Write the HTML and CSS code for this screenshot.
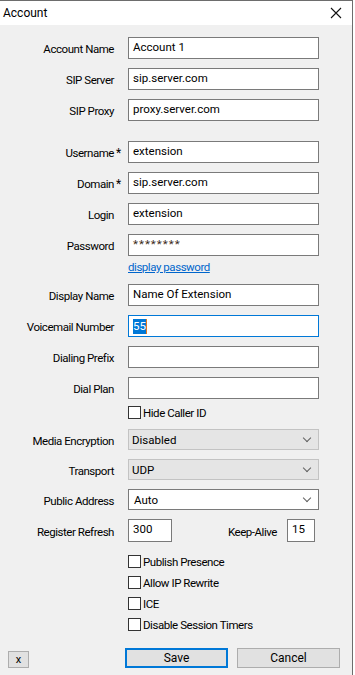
FILE: index.html
```html
<!DOCTYPE html>
<html>
<head>
	<title>Account</title>
	<link rel="stylesheet" href="styles.css">
</head>
<body>
	<div class="window">
		<div class="titlebar">
			<span class="title">Account</span>
			<svg class="close" width="12" height="12" viewBox="0 0 12 12">
				<path d="M1 1 L11 11 M11 1 L1 11" stroke="#111" stroke-width="1.1" fill="none"/>
			</svg>
		</div>
		<div class="content">
			<div class="row">
				<span class="label">Account Name</span><span class="req"></span>
				<div class="field">Account 1</div>
			</div>
			<div class="row">
				<span class="label">SIP Server</span><span class="req"></span>
				<div class="field">sip.server.com</div>
			</div>
			<div class="row group-end">
				<span class="label">SIP Proxy</span><span class="req"></span>
				<div class="field">proxy.server.com</div>
			</div>

			<div class="row">
				<span class="label">Username</span><span class="req">*</span>
				<div class="field">extension</div>
			</div>
			<div class="row">
				<span class="label">Domain</span><span class="req">*</span>
				<div class="field">sip.server.com</div>
			</div>
			<div class="row">
				<span class="label">Login</span><span class="req"></span>
				<div class="field">extension</div>
			</div>
			<div class="row tight">
				<span class="label">Password</span><span class="req"></span>
				<div class="field password">********</div>
			</div>
			<div class="link-row">
				<a href="#" class="link">display password</a>
			</div>

			<div class="row">
				<span class="label">Display Name</span><span class="req"></span>
				<div class="field">Name Of Extension</div>
			</div>
			<div class="row">
				<span class="label">Voicemail Number</span><span class="req"></span>
				<div class="field focused"><span class="selected">55</span><span class="caret"></span></div>
			</div>
			<div class="row">
				<span class="label">Dialing Prefix</span><span class="req"></span>
				<div class="field"></div>
			</div>
			<div class="row tight">
				<span class="label">Dial Plan</span><span class="req"></span>
				<div class="field"></div>
			</div>
			<div class="check-row hide-id">
				<span class="box"></span><span>Hide Caller ID</span>
			</div>

			<div class="row select-row">
				<span class="label">Media Encryption</span><span class="req"></span>
				<div class="select disabled"><span>Disabled</span><span class="chev"></span></div>
			</div>
			<div class="row select-row">
				<span class="label">Transport</span><span class="req"></span>
				<div class="select disabled"><span>UDP</span><span class="chev"></span></div>
			</div>
			<div class="row select-row">
				<span class="label">Public Address</span><span class="req"></span>
				<div class="select"><span>Auto</span><span class="chev"></span></div>
			</div>
			<div class="row refresh-row">
				<span class="label">Register Refresh</span><span class="req"></span>
				<div class="split">
					<div class="field small">300</div>
					<span class="label keep">Keep-Alive</span>
					<div class="field tiny">15</div>
				</div>
			</div>

			<div class="check-row">
				<span class="box"></span><span>Publish Presence</span>
			</div>
			<div class="check-row">
				<span class="box"></span><span>Allow IP Rewrite</span>
			</div>
			<div class="check-row">
				<span class="box"></span><span>ICE</span>
			</div>
			<div class="check-row">
				<span class="box"></span><span>Disable Session Timers</span>
			</div>

			<div class="buttons">
				<button class="btn small-btn">x</button>
				<button class="btn default">Save</button>
				<button class="btn">Cancel</button>
			</div>
		</div>
	</div>
</body>
</html>
```
FILE: styles.css
```css
body {
	margin: 0;
	font-family: "Segoe UI", Roboto, "Liberation Sans", sans-serif;
	font-size: 11.5px;
	color: #000;
	background: #fff;
}

.window {
	width: 353px;
	height: 675px;
	border-top: 1px solid #6d6d6d;
	border-right: 1px solid #6d6d6d;
	background: #f0f0f0;
	box-sizing: border-box;
	overflow: hidden;
}

.titlebar {
	height: 24px;
	background: #fff;
	display: flex;
	align-items: center;
	justify-content: space-between;
	padding: 0 10px 0 3px;
}

.title {
	font-size: 12px;
}

.content {
	padding-top: 12px;
}

.row {
	display: grid;
	grid-template-columns: 114px 14px 191px;
	align-items: center;
	height: 22px;
	margin-bottom: 9px;
}

.row.group-end {
	margin-bottom: 20px;
}

.row.tight {
	margin-bottom: 0;
}

.row.select-row {
	height: 21px;
}

.row.refresh-row {
	height: 23px;
	margin-bottom: 9px;
}

.label,
.check-row,
.link {
	font-size: 11.5px;
	letter-spacing: -0.45px;
}

.label {
	text-align: right;
	white-space: nowrap;
	padding-top: 2px;
}

.req {
	padding-left: 2px;
	padding-top: 2px;
	font-size: 12px;
}

.field {
	height: 22px;
	box-sizing: border-box;
	border: 1px solid #7a7a7a;
	background: #fff;
	padding: 2px 4px;
	font-size: 11.5px;
	white-space: nowrap;
	overflow: hidden;
}

.field.password {
	color: #3a2a1a;
	letter-spacing: 1px;
}

.field.focused {
	border-color: #0078d7;
	display: flex;
	align-items: center;
	padding: 0 4px;
}

.selected {
	background: #0078d7;
	color: #fff;
	line-height: 15px;
}

.caret {
	width: 1px;
	height: 15px;
	background: #e07a1f;
}

.link-row {
	height: 28px;
	padding-left: 128px;
	box-sizing: border-box;
	padding-top: 4px;
}

.link {
	color: #0066cc;
	text-decoration: underline;
}

.check-row {
	display: flex;
	align-items: center;
	gap: 2px;
	padding-left: 128px;
	height: 21px;
}

.check-row.hide-id {
	margin-top: 3px;
	margin-bottom: 6px;
}

.box {
	width: 13px;
	height: 13px;
	box-sizing: border-box;
	border: 1px solid #333;
	background: #fff;
}

.select {
	height: 21px;
	box-sizing: border-box;
	border: 1px solid #7a7a7a;
	background: #fff;
	display: flex;
	align-items: center;
	justify-content: space-between;
	padding: 0 8px 0 5px;
}

.select.disabled {
	background: #e5e5e5;
	border-color: #c3c3c3;
	padding-left: 3px;
}

.chev {
	width: 5px;
	height: 5px;
	border-right: 1px solid #606060;
	border-bottom: 1px solid #606060;
	transform: rotate(45deg);
	margin-top: -4px;
}

.split {
	display: flex;
	align-items: center;
	width: 187px;
}

.field.small {
	width: 44px;
	height: 23px;
}

.field.tiny {
	width: 28px;
	height: 23px;
	margin-left: 10px;
}

.label.keep {
	margin-left: auto;
}

.buttons {
	display: flex;
	align-items: flex-end;
	margin-top: 13px;
	padding-left: 8px;
}

.btn {
	font-family: inherit;
	font-size: 12px;
	background: #e1e1e1;
	border: 1px solid #adadad;
	height: 20px;
	width: 103px;
	padding: 0;
	color: #000;
}

.btn.small-btn {
	width: 21px;
	height: 17px;
	margin-right: 96px;
	font-size: 11px;
	line-height: 13px;
}

.btn.default {
	border: 2px solid #0078d7;
	margin-right: 9px;
}
```
